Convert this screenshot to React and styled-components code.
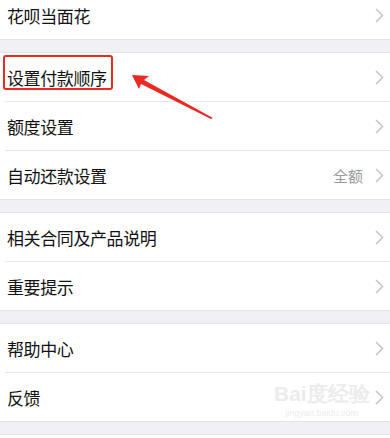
import React from 'react';
import styled, { createGlobalStyle } from 'styled-components';

const GlobalStyle = createGlobalStyle`
    html, body {
        margin: 0;
        padding: 0;
        background: #f1f1f5;
        font-family: 'Noto Sans CJK SC', 'Noto Sans', sans-serif;
    }

    * {
        box-sizing: border-box;
    }
`

const Page = styled.div`
    position: relative;
    width: 390px;
    height: 438px;
    overflow: hidden;
    background: #f1f1f5;
`

const List = styled.div`
    margin-top: -10px;
    display: flex;
    flex-direction: column;
    gap: 12px;
`

const Group = styled.div`
    background: #ffffff;
    border-top: 1px solid #e4e4e8;
    border-bottom: 1px solid #e4e4e8;
    display: flex;
    flex-direction: column;
`

const Row = styled.div`
    position: relative;
    height: 48px;
    padding: 0 6px 0 7px;
    display: flex;
    align-items: center;
    font-size: 17px;
    color: #111111;

    & + & {
        height: 49px;
        border-top: 1px solid #e8e8e8;
        margin-left: 5px;
        padding-left: 2px;
    }
`

const Label = styled.span`
    flex: 1;
    letter-spacing: -0.4px;
`

const Value = styled.span`
    margin-right: 12px;
    font-size: 15px;
    color: #9a9a9a;
`

const Highlight = styled.div`
    position: absolute;
    left: 3px;
    top: 2px;
    width: 110px;
    height: 35px;
    border: 2px solid #ea2a22;
    border-radius: 3px;
`

const Arrow = styled.svg`
    position: absolute;
    left: 125px;
    top: 68px;
`

const Watermark = styled.div`
    position: absolute;
    left: 274px;
    top: 380px;
    display: flex;
    flex-direction: column;
    align-items: center;
    color: #ececec;
    pointer-events: none;

    .big {
        font-family: 'Liberation Sans', sans-serif;
        font-size: 21px;
        font-weight: 700;
    }

    .small {
        font-size: 9px;
        font-family: 'Liberation Sans', sans-serif;
    }
`

const Chevron = () => (
    <svg width="9" height="15" viewBox="0 0 9 15">
        <path d="M1 1 L7.5 7.5 L1 14" fill="none" stroke="#c4c4c8" strokeWidth="1.5" />
    </svg>
)

const groups = [
    [{ label: '花呗当面花' }],
    [
        { label: '设置付款顺序', marked: true },
        { label: '额度设置' },
        { label: '自动还款设置', value: '全额' },
    ],
    [{ label: '相关合同及产品说明' }, { label: '重要提示' }],
    [{ label: '帮助中心' }, { label: '反馈' }],
    [],
]

const App = () => {
    return (
        <Page>
            <GlobalStyle />
            <List>
                {groups.map((group, gi) => (
                    <Group key={gi}>
                        {group.map((item, index) => (
                            <Row key={index}>
                                <Label>{item.label}</Label>
                                {item.value && <Value>{item.value}</Value>}
                                <Chevron />
                                {item.marked && <Highlight />}
                            </Row>
                        ))}
                        {group.length === 0 && <Row />}
                    </Group>
                ))}
            </List>
            <Arrow width="95" height="55" viewBox="0 0 95 55">
                <path d="M7 7 L24 8 L19 12 L88 50 L86 51 L16 16 L14 21 Z" fill="#ea2a22" />
            </Arrow>
            <Watermark>
                <span className="big">Bai度经验</span>
                <span className="small">jingyan.baidu.com</span>
            </Watermark>
        </Page>
    )
}

export default App;
